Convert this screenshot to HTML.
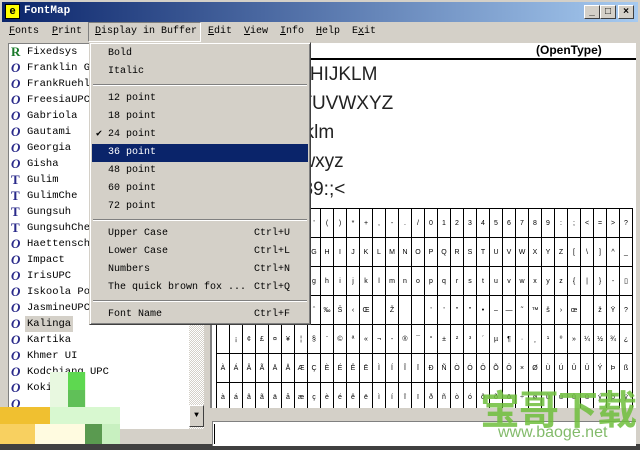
<!DOCTYPE html>
<html><head><meta charset="utf-8"><style>
*{margin:0;padding:0;box-sizing:border-box}
body{width:640px;height:450px;overflow:hidden;background:#d4d0c8;position:relative;font-family:"Liberation Mono","Noto Sans CJK SC",monospace;font-size:10px;color:#000}
.abs{position:absolute}
#title{left:0;top:0;width:640px;height:22px;background:linear-gradient(90deg,#0a246a,#a6caf0);border:2px solid #d4d0c8;border-bottom:none}
#title .t{left:22px;top:3px;color:#fff;font-weight:bold;font-size:11px}
.tb{top:3px;width:16px;height:14px;background:#d4d0c8;border:1px solid;border-color:#fff #404040 #404040 #fff;font:bold 10px "Liberation Sans",sans-serif;text-align:center;line-height:12px}
#menu span{position:absolute;top:26px}
u{text-decoration:underline}
#list{left:8px;top:43px;width:181px;height:386px;background:#fff;border-left:1px solid #808080;border-top:1px solid #808080;overflow:hidden}
#list div{position:absolute;left:18px;height:16px;line-height:16px;font-size:10.5px}
#list i{position:absolute;left:-16px;font:italic bold 13px "Liberation Serif",serif;color:#2a2a8a}
#sb{left:189px;top:43px;width:15px;height:386px;background:repeating-conic-gradient(#d4d0c8 0 25%,#fff 0 50%) 0 0/2px 2px}
#right{left:210px;top:43px;width:426px;height:365px;background:#fff;border-left:2px solid #808080;overflow:hidden}
.s{position:absolute;left:6px;font:19px "Liberation Sans",sans-serif;color:#222}
table{position:absolute;left:4px;top:165px;border-collapse:collapse}
td{width:13px;height:29px;border:1px solid #000;text-align:center;font:7px "Liberation Sans",sans-serif;padding:0}
#dd{left:89px;top:42px;width:222px;height:283px;background:#d4d0c8;border:1px solid;border-color:#d4d0c8 #404040 #404040 #d4d0c8;box-shadow:inset 1px 1px #fff,inset -1px -1px #808080}
#dd div{position:absolute;left:18px;height:18px;line-height:18px}
#dd .k{left:164px}
#dd hr{position:absolute;left:3px;width:214px;border:none;border-top:1px solid #808080;border-bottom:1px solid #fff}
#dd .hl{left:2px;width:216px;padding-left:16px;background:#0a246a;color:#fff}
</style></head><body>
<div id="title" class="abs">
<div class="abs" style="left:3px;top:2px;width:15px;height:15px;background:#ff0;border:1px solid #000;font:bold 11px 'Liberation Sans';text-align:center;line-height:13px">e</div>
<div class="abs t">FontMap</div>
<div class="abs tb" style="left:582px">_</div><div class="abs tb" style="left:598px">□</div><div class="abs tb" style="left:616px">×</div>
</div>
<div id="menu">
<span style="left:9px"><u>F</u>onts</span><span style="left:52px"><u>P</u>rint</span>
<div class="abs" style="left:88px;top:22px;width:113px;height:20px;border:1px solid;border-color:#808080 #fff #fff #808080"></div>
<span style="left:95px"><u>D</u>isplay in Buffer</span><span style="left:208px"><u>E</u>dit</span><span style="left:244px"><u>V</u>iew</span><span style="left:280px"><u>I</u>nfo</span><span style="left:316px"><u>H</u>elp</span><span style="left:352px">E<u>x</u>it</span>
</div>
<div id="list" class="abs">
<div style="top:0"><i style="color:#1a7a2a;font-style:normal;font-family:'Liberation Serif'">R</i>Fixedsys</div>
<div style="top:16px"><i>O</i>Franklin Go</div>
<div style="top:32px"><i>O</i>FrankRuehl</div>
<div style="top:48px"><i>O</i>FreesiaUPC</div>
<div style="top:64px"><i>O</i>Gabriola</div>
<div style="top:80px"><i>O</i>Gautami</div>
<div style="top:96px"><i>O</i>Georgia</div>
<div style="top:112px"><i>O</i>Gisha</div>
<div style="top:128px"><i style="font-style:normal">T</i>Gulim</div>
<div style="top:144px"><i style="font-style:normal">T</i>GulimChe</div>
<div style="top:160px"><i style="font-style:normal">T</i>Gungsuh</div>
<div style="top:176px"><i style="font-style:normal">T</i>GungsuhChe</div>
<div style="top:192px"><i>O</i>Haettenschw</div>
<div style="top:208px"><i>O</i>Impact</div>
<div style="top:224px"><i>O</i>IrisUPC</div>
<div style="top:240px"><i>O</i>Iskoola Pot</div>
<div style="top:256px"><i>O</i>JasmineUPC</div>
<div style="top:272px;background:#d4d0c8;padding:0 2px;margin-left:-2px"><i style="left:-14px">O</i>Kalinga</div>
<div style="top:288px"><i>O</i>Kartika</div>
<div style="top:304px"><i>O</i>Khmer UI</div>
<div style="top:320px"><i>O</i>Kodchiang UPC</div>
<div style="top:336px"><i>O</i>Kokila</div>
<div style="top:352px"><i>O</i></div>
</div>
<div id="sb" class="abs"></div>
<div class="abs" style="left:189px;top:405px;width:15px;height:22px;background:#d4d0c8;border:1px solid;border-color:#fff #404040 #404040 #fff;font-size:8px;text-align:center;line-height:20px">▼</div>
<!-- pixelated blur -->
<div class="abs" style="left:50px;top:372px;width:36px;height:35px;background:#e8f8e0"></div>
<div class="abs" style="left:68px;top:372px;width:17px;height:18px;background:#5ed850"></div>
<div class="abs" style="left:68px;top:390px;width:17px;height:17px;background:#60c058"></div>
<div class="abs" style="left:0;top:407px;width:50px;height:17px;background:#f0c030"></div>
<div class="abs" style="left:50px;top:407px;width:70px;height:17px;background:#d8f8d0"></div>
<div class="abs" style="left:0;top:424px;width:35px;height:20px;background:#f8d060"></div>
<div class="abs" style="left:35px;top:424px;width:50px;height:20px;background:#fffbe0"></div>
<div class="abs" style="left:85px;top:424px;width:17px;height:20px;background:#5a9a50"></div>
<div class="abs" style="left:102px;top:424px;width:18px;height:20px;background:#c8f0c0"></div>
<div class="abs" style="left:0;top:444px;width:640px;height:6px;background:#404040"></div>
<div id="right" class="abs">
<div class="abs" style="left:0;top:15px;width:426px;border-top:2px solid #000"></div>
<div class="abs" style="left:324px;top:0;font:bold 12px 'Liberation Sans',sans-serif">(OpenType)</div>
<div class="s" style="top:21px">ABCDEFGHIJKLM</div>
<div class="s" style="top:50px">NOPQRSTUVWXYZ</div>
<div class="s" style="top:79px">abcdefghijklm</div>
<div class="s" style="top:108px">nopqrstuvwxyz</div>
<div class="s" style="top:136px">0123456789:;&lt;</div>
<table>
<tr><td></td><td>!</td><td>"</td><td>#</td><td>$</td><td>%</td><td>&amp;</td><td>'</td><td>(</td><td>)</td><td>*</td><td>+</td><td>,</td><td>-</td><td>.</td><td>/</td><td>0</td><td>1</td><td>2</td><td>3</td><td>4</td><td>5</td><td>6</td><td>7</td><td>8</td><td>9</td><td>:</td><td>;</td><td>&lt;</td><td>=</td><td>&gt;</td><td>?</td></tr>
<tr><td>@</td><td>A</td><td>B</td><td>C</td><td>D</td><td>E</td><td>F</td><td>G</td><td>H</td><td>I</td><td>J</td><td>K</td><td>L</td><td>M</td><td>N</td><td>O</td><td>P</td><td>Q</td><td>R</td><td>S</td><td>T</td><td>U</td><td>V</td><td>W</td><td>X</td><td>Y</td><td>Z</td><td>[</td><td>\</td><td>]</td><td>^</td><td>_</td></tr>
<tr><td>`</td><td>a</td><td>b</td><td>c</td><td>d</td><td>e</td><td>f</td><td>g</td><td>h</td><td>i</td><td>j</td><td>k</td><td>l</td><td>m</td><td>n</td><td>o</td><td>p</td><td>q</td><td>r</td><td>s</td><td>t</td><td>u</td><td>v</td><td>w</td><td>x</td><td>y</td><td>z</td><td>{</td><td>|</td><td>}</td><td>-</td><td>▯</td></tr>
<tr><td>€</td><td>‚</td><td>ƒ</td><td>„</td><td>…</td><td>†</td><td>‡</td><td>ˆ</td><td>‰</td><td>Š</td><td>‹</td><td>Œ</td><td></td><td>Ž</td><td></td><td></td><td>'</td><td>'</td><td>"</td><td>"</td><td>•</td><td>–</td><td>—</td><td>˜</td><td>™</td><td>š</td><td>›</td><td>œ</td><td></td><td>ž</td><td>Ÿ</td><td>?</td></tr>
<tr><td></td><td>¡</td><td>¢</td><td>£</td><td>¤</td><td>¥</td><td>¦</td><td>§</td><td>¨</td><td>©</td><td>ª</td><td>«</td><td>¬</td><td>-</td><td>®</td><td>¯</td><td>°</td><td>±</td><td>²</td><td>³</td><td>´</td><td>µ</td><td>¶</td><td>·</td><td>¸</td><td>¹</td><td>º</td><td>»</td><td>¼</td><td>½</td><td>¾</td><td>¿</td></tr>
<tr><td>À</td><td>Á</td><td>Â</td><td>Ã</td><td>Ä</td><td>Å</td><td>Æ</td><td>Ç</td><td>È</td><td>É</td><td>Ê</td><td>Ë</td><td>Ì</td><td>Í</td><td>Î</td><td>Ï</td><td>Ð</td><td>Ñ</td><td>Ò</td><td>Ó</td><td>Ô</td><td>Õ</td><td>Ö</td><td>×</td><td>Ø</td><td>Ù</td><td>Ú</td><td>Û</td><td>Ü</td><td>Ý</td><td>Þ</td><td>ß</td></tr>
<tr><td>à</td><td>á</td><td>â</td><td>ã</td><td>ä</td><td>å</td><td>æ</td><td>ç</td><td>è</td><td>é</td><td>ê</td><td>ë</td><td>ì</td><td>í</td><td>î</td><td>ï</td><td>ð</td><td>ñ</td><td>ò</td><td>ó</td><td>ô</td><td>õ</td><td>ö</td><td>÷</td><td>ø</td><td>ù</td><td>ú</td><td>û</td><td>ü</td><td>ý</td><td>þ</td><td>ÿ</td></tr>
</table>
</div>
<div class="abs" style="left:212px;top:421px;width:424px;height:25px;background:#fff;border-left:1px solid #808080;border-top:1px solid #808080"></div>
<div class="abs" style="left:214px;top:424px;width:1px;height:20px;background:#000"></div>
<div class="abs" style="left:480px;top:385px;font:bold 40px 'Noto Sans CJK SC',sans-serif;color:rgba(110,190,60,.85);letter-spacing:-1px;line-height:44px">宝哥下载</div>
<div class="abs" style="left:498px;top:424px;font:16px 'Liberation Sans',sans-serif;color:rgba(100,170,70,.8)">www.baoge.net</div>
<div id="dd" class="abs">
<div style="top:2px">Bold</div><div style="top:20px">Italic</div>
<hr style="top:41px">
<div style="top:47px">12 point</div><div style="top:65px">18 point</div>
<div style="top:83px"><span style="position:absolute;left:-12px">✔</span>24 point</div>
<div class="hl" style="top:101px">36 point</div>
<div style="top:119px">48 point</div><div style="top:137px">60 point</div><div style="top:155px">72 point</div>
<hr style="top:176px">
<div style="top:182px">Upper Case</div><div class="k" style="top:182px">Ctrl+U</div>
<div style="top:200px">Lower Case</div><div class="k" style="top:200px">Ctrl+L</div>
<div style="top:218px">Numbers</div><div class="k" style="top:218px">Ctrl+N</div>
<div style="top:236px">The quick brown fox ...</div><div class="k" style="top:236px">Ctrl+Q</div>
<hr style="top:257px">
<div style="top:263px">Font Name</div><div class="k" style="top:263px">Ctrl+F</div>
</div>
</body></html>
